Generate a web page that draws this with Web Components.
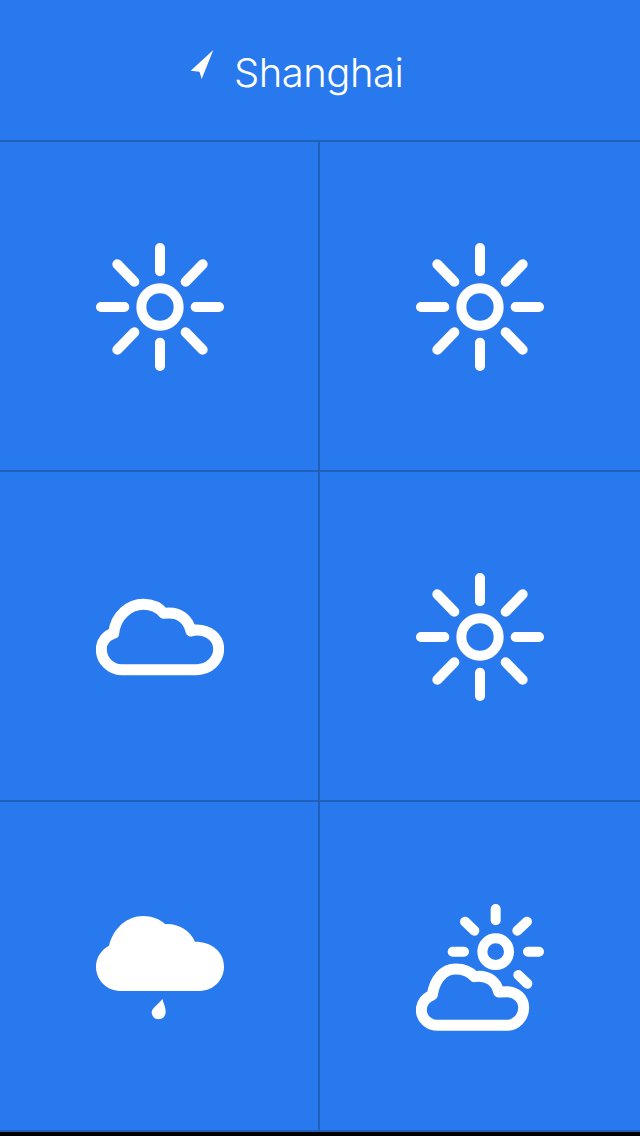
<!DOCTYPE html>
<html>
<head>
<meta charset="utf-8">
<title>Shanghai</title>
<style>
    html, body { margin: 0; padding: 0; background: #000; }
    body { width: 640px; height: 1136px; overflow: hidden; }
</style>
</head>
<body>
<weather-app>
    <city-header slot="header">Shanghai</city-header>
    <weather-cell side="left"><weather-icon kind="sun"></weather-icon></weather-cell>
    <weather-cell><weather-icon kind="sun"></weather-icon></weather-cell>
    <weather-cell side="left"><weather-icon kind="cloud"></weather-icon></weather-cell>
    <weather-cell><weather-icon kind="sun"></weather-icon></weather-cell>
    <weather-cell side="left"><weather-icon kind="rain"></weather-icon></weather-cell>
    <weather-cell><weather-icon kind="partly"></weather-icon></weather-cell>
</weather-app>

<script>
class WeatherApp extends HTMLElement {
    constructor() {
        super();
        this.attachShadow({ mode: 'open' });
    }

    connectedCallback() {
        this.shadowRoot.innerHTML = `
            <style>
                :host {
                    display: block;
                    width: 640px;
                    height: 1132px;
                    background: #2979ee;
                    --line: #2060b8;
                }
                .grid {
                    display: grid;
                    grid-template-columns: 320px 320px;
                    grid-auto-rows: 330px;
                }
            </style>
            <slot name="header"></slot>
            <div class="grid"><slot></slot></div>
        `;
    }
}

class CityHeader extends HTMLElement {
    constructor() {
        super();
        this.attachShadow({ mode: 'open' });
    }

    connectedCallback() {
        this.shadowRoot.innerHTML = `
            <style>
                :host {
                    display: flex;
                    align-items: center;
                    gap: 20px;
                    box-sizing: border-box;
                    height: 142px;
                    padding: 0 0 0 190px;
                    border-bottom: 2px solid var(--line);
                    color: #fff;
                    font: 300 40px Inter, "Liberation Sans", sans-serif;
                    letter-spacing: -0.5px;
                }
                svg { display: block; margin-top: -10px; }
                span { display: block; margin-top: 5px; }
            </style>
            <svg width="24" height="30" viewBox="0 0 24 30">
                <path fill="#fff" d="M23.3 0 L0.7 20.7 L9.5 21.7 L11.7 29 Z"/>
            </svg>
            <span><slot></slot></span>
        `;
    }
}

class WeatherCell extends HTMLElement {
    constructor() {
        super();
        this.attachShadow({ mode: 'open' });
    }

    connectedCallback() {
        this.shadowRoot.innerHTML = `
            <style>
                :host {
                    display: flex;
                    align-items: center;
                    justify-content: center;
                    box-shadow: inset 0 -2px 0 var(--line);
                }
                :host([side="left"]) {
                    box-shadow: inset -2px -2px 0 var(--line);
                }
            </style>
            <slot></slot>
        `;
    }
}

// all shapes are in a 384 unit box, drawn at 128px
const SUN = `
    <g transform="translate(192 192)" fill="none" stroke="#fff" stroke-width="30" stroke-linecap="round">
        <circle r="56"/>
        <path d="M0 -177V-107M0 107V177M-177 0H-107M107 0H177M-128 -128L-77 -76M128 -128L77 -76M-128 128L-77 76M128 128L77 76"/>
    </g>`;
const CLOUD = `
    <path transform="translate(-33 36)" fill="none" stroke="#fff" stroke-width="33" stroke-linejoin="round"
        d="M110 254H335C372 254 401 226 401 192C401 158 372 135 335 135C330 135 324 136 318 138C310 105 285 78 236 85C222 68 200 58 175 58C135 58 92 90 86 145C63 152 49 170 49 193C49 228 78 254 110 254Z"/>`;
const RAIN = `
    <g transform="translate(-33 6)" fill="#fff">
        <path d="M110 258H340C385 258 417 225 417 185C417 140 380 110 330 110C315 75 280 55 240 57C225 42 200 33 175 33C125 33 85 70 72 122C48 135 33 158 33 185C33 225 65 258 110 258Z"/>
        <path d="M232 282C238 300 242 310 242 320C242 334 232 343 220 343C208 343 200 332 200 322C200 310 222 296 232 282Z"/>
    </g>`;
const PARTLY = `
    <g transform="translate(-33 -24)">
        <g fill="none" stroke="#fff" stroke-linecap="round">
            <circle cx="272" cy="170" r="40" stroke-width="30"/>
            <path stroke-width="30" d="M272 42V76M369 170H402M143 170H177M180 80L208 107M366 80L337 107M340 240L367 266"/>
        </g>
        <path fill="none" stroke="#fff" stroke-width="33" stroke-linejoin="round"
            d="M100 391H305C333 391 356 367 356 338C356 310 333 290 305 290C295 290 287 290 281 291C275 262 250 238 208 245C196 231 175 222 152 222C115 222 88 255 82 300C62 308 49 325 49 345C49 372 72 391 100 391Z"/>
    </g>`;
const SHAPES = { sun: SUN, cloud: CLOUD, rain: RAIN, partly: PARTLY };

class WeatherIcon extends HTMLElement {
    constructor() {
        super();
        this.attachShadow({ mode: 'open' });
    }

    connectedCallback() {
        const kind = this.getAttribute('kind') || 'sun';

        this.shadowRoot.innerHTML = `
            <style>
                :host { display: block; width: 128px; height: 128px; }
                svg { display: block; }
            </style>
            <svg width="128" height="128" viewBox="0 0 384 384">${SHAPES[kind]}</svg>
        `;
    }
}

customElements.define('weather-app', WeatherApp);
customElements.define('city-header', CityHeader);
customElements.define('weather-cell', WeatherCell);
customElements.define('weather-icon', WeatherIcon);
</script>
</body>
</html>
